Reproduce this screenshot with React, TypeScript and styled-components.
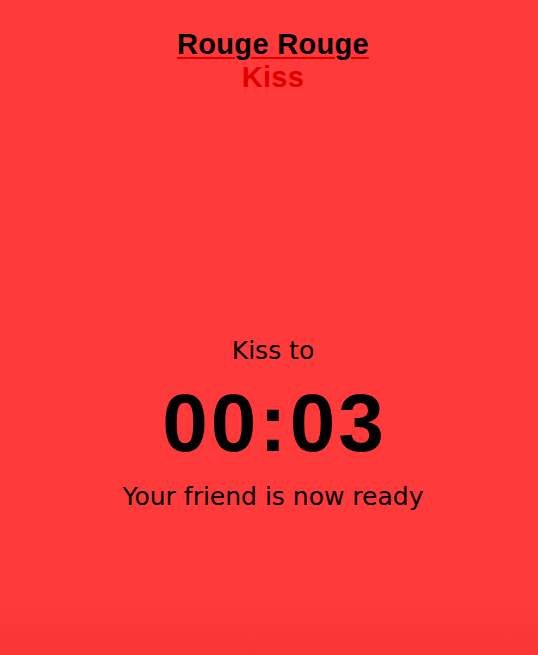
import React from "react";
import styled, { createGlobalStyle } from "styled-components";

const Global = createGlobalStyle`
  html, body { margin: 0; padding: 0; }
  body { font-family: "Liberation Sans", Arial, sans-serif; }
`;

const Screen = styled.div`
  width: 538px;
  height: 655px;
  background: linear-gradient(to bottom, #ff3a3a 0%, #ff3a3a 92%, #f83636 100%);
  display: flex;
  flex-direction: column;
  align-items: center;
  box-sizing: border-box;
  padding: 28px 0 0 8px;
`;

const Header = styled.div`
  display: flex;
  flex-direction: column;
  align-items: center;
  font-weight: 700;
  font-size: 29px;
  line-height: 33px;
  letter-spacing: 0.3px;
`;

const Brand = styled.span`
  color: #000;
  text-decoration: underline;
  text-decoration-color: #e00000;
  text-decoration-thickness: 2px;
  text-underline-offset: 3px;
`;

const Mode = styled.span`
  color: #e00000;
`;

const Center = styled.div`
  display: flex;
  flex-direction: column;
  align-items: center;
  margin-top: 243px;
  color: #000;
`;

const Label = styled.div<{ $gap?: number }>`
  font-family: "DejaVu Sans", "Liberation Sans", sans-serif;
  font-size: 25px;
  line-height: 28px;
  margin-top: ${(p) => p.$gap ?? 0}px;
`;

const Timer = styled.div`
  font-size: 82px;
  font-weight: 700;
  line-height: 96px;
  letter-spacing: 3px;
  margin: 10px -3px 0 0;
`;

export default function App() {
  return (
    <>
      <Global />
      <Screen>
        <Header>
          <Brand>Rouge Rouge</Brand>
          <Mode>Kiss</Mode>
        </Header>
        <Center>
          <Label>Kiss to</Label>
          <Timer>00:03</Timer>
          <Label $gap={12}>Your friend is now ready</Label>
        </Center>
      </Screen>
    </>
  );
}
